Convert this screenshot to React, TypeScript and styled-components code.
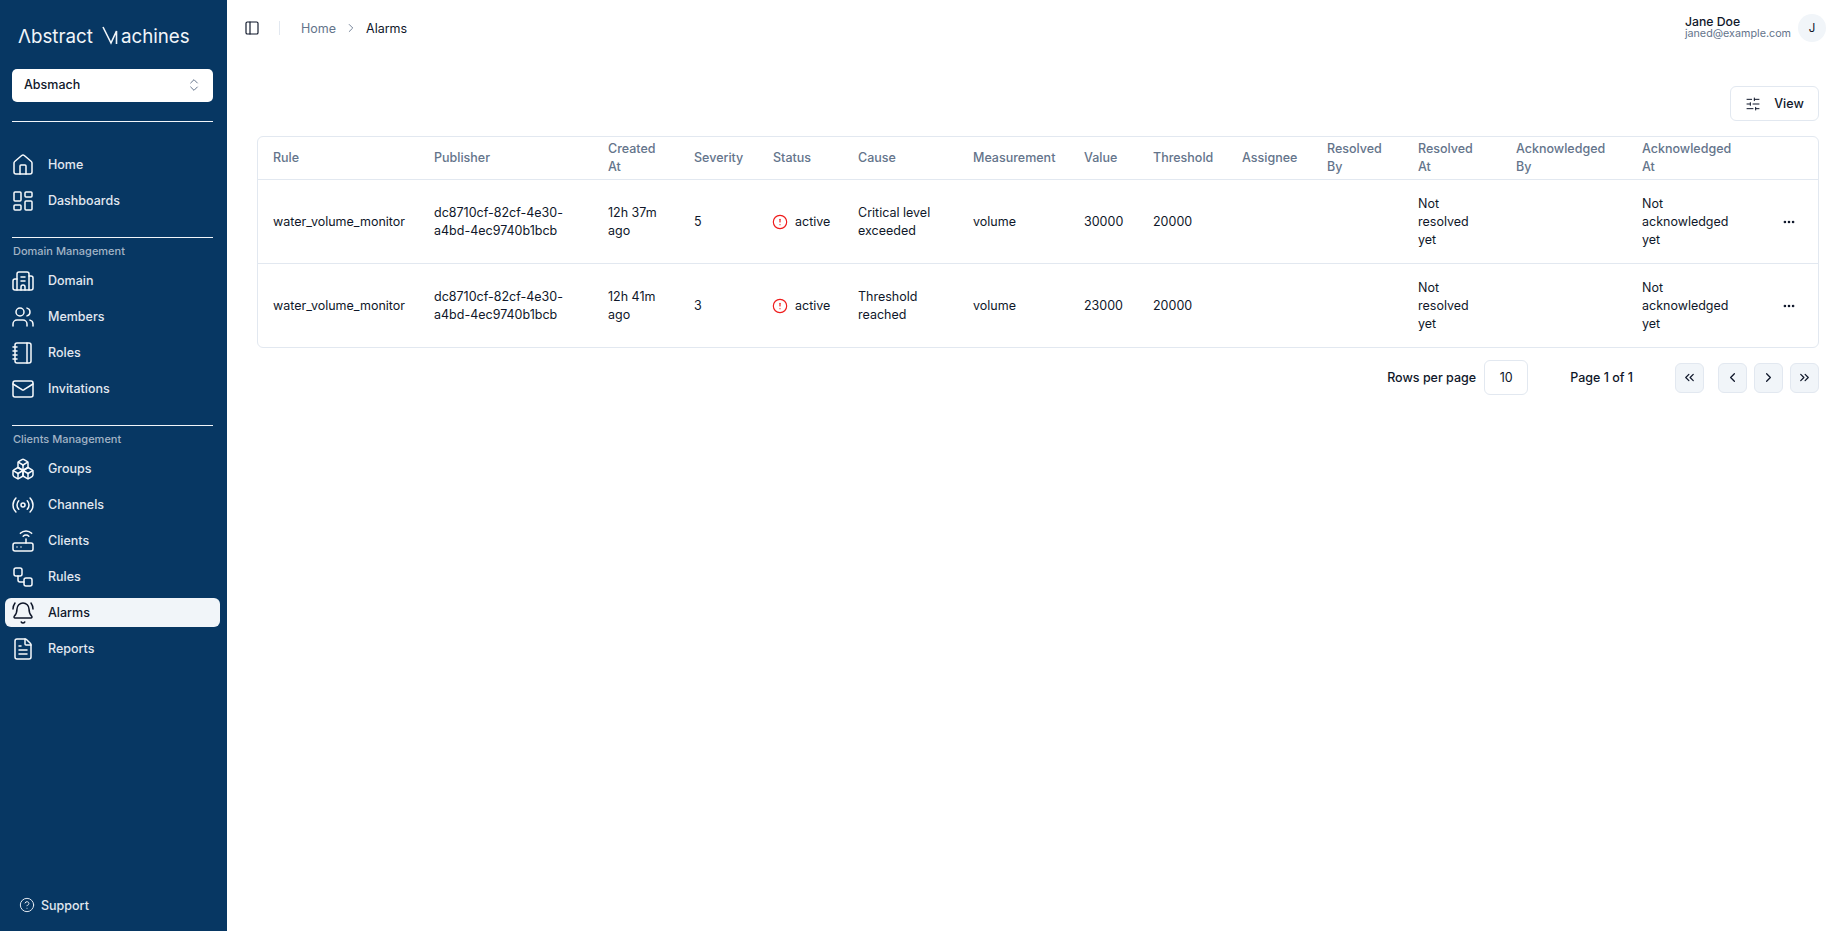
import React from 'react';
import styled, { createGlobalStyle } from 'styled-components';
import {
  Bell, BellRing, Boxes, Building2, ChevronLeft, ChevronRight, ChevronsLeft, ChevronsRight, ChevronsUpDown,
  CircleAlert, CircleHelp, Ellipsis, FileText, House, LayoutDashboard, Mail, Notebook, PanelLeft, Radio,
  Router, SlidersHorizontal, Users, Workflow,
} from 'lucide-react';

const GlobalStyle = createGlobalStyle`
  html, body { margin: 0; padding: 0; height: 100%; background: #fff; }
  body { font-family: Inter, "Noto Sans", sans-serif; color: #0f172a; }
  #root { height: 100%; }
  * { box-sizing: border-box; }
`;

const Shell = styled.div`
  display: flex;
  height: 931px;
  overflow: hidden;
`;

const Sidebar = styled.aside`
  width: 227px;
  flex: none;
  display: flex;
  flex-direction: column;
  background: #073763;
  padding: 0 7px 0 5px;
`;

const Logo = styled.div`
  height: 69px;
  padding: 25px 0 0 13px;
  display: flex;
  align-items: flex-start;
  color: #f1f5f9;
  font-size: 18.75px;
  line-height: 24px;
  font-weight: 400;
  white-space: nowrap;
`;

const LogoMark = styled.svg`
  width: 16px;
  height: 20px;
  margin: 0 3px 0 9px;
  flex: none;
`;

const TeamSelect = styled.button`
  height: 33px;
  margin: 0 0 0 7px;
  width: 201px;
  flex: none;
  padding: 0 11px 2px 12px;
  border: 0;
  border-radius: 5px;
  background: #fff;
  display: flex;
  align-items: center;
  justify-content: space-between;
  font: 500 12.5px Inter, sans-serif;
  color: #0f172a;
  svg { color: #64748b; }
`;

const Divider = styled.hr<{ $top: number; $bottom: number }>`
  width: 201px;
  margin: ${p => p.$top}px 0 ${p => p.$bottom}px 7px;
  border: 0;
  border-top: 1px solid #f1f5f9;
  flex: none;
`;

const GroupLabel = styled.div`
  height: 15px;
  line-height: 15px;
  margin: 0 0 7px 8px;
  font-size: 11px;
  font-weight: 500;
  color: #a3b4c6;
`;

const NavList = styled.nav`
  display: flex;
  flex-direction: column;
  gap: 7px;
`;

const NavItem = styled.a<{ $active?: boolean }>`
  height: 29px;
  display: flex;
  align-items: center;
  gap: 13px;
  padding-left: 6px;
  border-radius: 6px;
  font-size: 12.5px;
  font-weight: 500;
  color: ${p => (p.$active ? '#0f172a' : '#e2e8f0')};
  background: ${p => (p.$active ? '#f1f5f9' : 'transparent')};
  svg { flex: none; width: 24px; height: 24px; stroke-width: 1.5; color: ${p => (p.$active ? '#0f172a' : '#f8fafc')}; }
`;

const SupportLink = styled.a`
  margin: auto 0 17px 14px;
  height: 18px;
  display: flex;
  align-items: center;
  gap: 6px;
  font-size: 12.5px;
  font-weight: 500;
  color: #e2e8f0;
`;

const Main = styled.main`
  flex: 1;
  min-width: 0;
  display: flex;
  flex-direction: column;
`;

const TopBar = styled.header`
  height: 56px;
  flex: none;
  display: flex;
  align-items: center;
  padding: 0 22px 0 17px;
`;

const SideToggle = styled.span`
  display: flex;
  margin-right: 19px;
  color: #0f172a;
`;

const VSep = styled.span`
  width: 1px;
  height: 14px;
  background: #e2e8f0;
  margin-right: 21px;
`;

const Crumbs = styled.div`
  display: flex;
  align-items: center;
  font-size: 12.5px;
  color: #64748b;
  gap: 8px;
  svg { color: #64748b; }
`;

const CrumbNow = styled.span`
  color: #0f172a;
`;

const UserBox = styled.div`
  margin-left: auto;
  display: flex;
  align-items: center;
  gap: 7px;
`;

const UserText = styled.div`
  display: flex;
  flex-direction: column;
  padding-bottom: 2px;
`;

const UserName = styled.span`
  font-size: 12.25px;
  line-height: 13px;
  font-weight: 500;
  color: #0f172a;
`;

const UserMail = styled.span`
  font-size: 10.75px;
  line-height: 12px;
  color: #64748b;
`;

const Avatar = styled.span`
  width: 28px;
  height: 28px;
  border-radius: 50%;
  background: #f1f5f9;
  display: flex;
  align-items: center;
  justify-content: center;
  font-size: 11.5px;
  color: #0f172a;
`;

const Content = styled.section`
  padding: 30px 29px 0 30px;
`;

const ViewRow = styled.div`
  display: flex;
  justify-content: flex-end;
  margin-bottom: 15px;
`;

const ViewButton = styled.button`
  width: 89px;
  height: 35px;
  display: flex;
  align-items: center;
  justify-content: center;
  gap: 13px;
  background: #fff;
  border: 1px solid #e2e8f0;
  border-radius: 6px;
  font: 500 12.5px Inter, sans-serif;
  color: #0f172a;
`;

const TableFrame = styled.div`
  border: 1px solid #e2e8f0;
  border-radius: 6px;
  overflow: hidden;
`;

const Table = styled.table`
  width: 100%;
  table-layout: fixed;
  border-collapse: collapse;
  font-size: 12.5px;
  line-height: 18px;
`;

const Col = styled.col<{ $width: number }>`
  width: ${p => p.$width}px;
`;

const HeadCell = styled.th`
  height: 42px;
  padding: 0 16px 0 15px;
  text-align: left;
  font-weight: 500;
  color: #64748b;
  border-bottom: 1px solid #e2e8f0;
`;

const Row = styled.tr`
  & + & td { border-top: 1px solid #e2e8f0; }
`;

const Cell = styled.td<{ $nowrap?: boolean }>`
  height: 84px;
  padding: 2px 16px 0 15px;
  color: #0f172a;
  white-space: ${p => (p.$nowrap ? 'nowrap' : 'normal')};
`;

const StatusCell = styled.span`
  display: flex;
  align-items: center;
  gap: 7px;
  margin-left: -1px;
  white-space: nowrap;
  svg { color: #ef1c1c; flex: none; }
`;

const DotsButton = styled.span`
  display: flex;
  justify-content: center;
  color: #0f172a;
  margin-left: 4px;
`;

const Pager = styled.div`
  display: flex;
  align-items: center;
  justify-content: flex-end;
  margin-top: 12px;
  font-size: 12.5px;
  font-weight: 500;
  color: #0f172a;
`;

const PageSize = styled.span`
  width: 44px;
  height: 35px;
  margin: 0 42px 0 8px;
  display: flex;
  align-items: center;
  justify-content: center;
  border: 1px solid #e2e8f0;
  border-radius: 6px;
  font-weight: 400;
`;

const PageLabel = styled.span`
  margin-right: 42px;
`;

const PageButton = styled.span<{ $gap: number }>`
  width: 29px;
  height: 30px;
  margin-right: ${p => p.$gap}px;
  display: flex;
  align-items: center;
  justify-content: center;
  background: #f1f5f9;
  border: 1px solid #e2e8f0;
  border-radius: 6px;
  color: #0f172a;
`;

const colWidths = [161, 174, 86, 79, 85, 115, 111, 69, 89, 85, 91, 98, 126, 130, 61];

const headers = [
  'Rule', 'Publisher', 'Created At', 'Severity', 'Status', 'Cause', 'Measurement', 'Value', 'Threshold',
  'Assignee', 'Resolved By', 'Resolved At', 'Acknowledged By', 'Acknowledged At', '',
];

const alarms = [
  { created: '12h 37m ago', severity: '5', cause: 'Critical level exceeded', value: '30000' },
  { created: '12h 41m ago', severity: '3', cause: 'Threshold reached', value: '23000' },
];

const topNav = [
  { label: 'Home', icon: House },
  { label: 'Dashboards', icon: LayoutDashboard },
];

const domainNav = [
  { label: 'Domain', icon: Building2 },
  { label: 'Members', icon: Users },
  { label: 'Roles', icon: Notebook },
  { label: 'Invitations', icon: Mail },
];

const clientNav = [
  { label: 'Groups', icon: Boxes },
  { label: 'Channels', icon: Radio },
  { label: 'Clients', icon: Router },
  { label: 'Rules', icon: Workflow },
  { label: 'Alarms', icon: BellRing, active: true },
  { label: 'Reports', icon: FileText },
];

type NavEntry = { label: string; icon: typeof Bell; active?: boolean };

const NavGroup = ({ items }: { items: NavEntry[] }) => (
  <NavList>
    {items.map(({ label, icon: Icon, active }) => (
      <NavItem key={label} $active={active}>
        <Icon />
        {label}
      </NavItem>
    ))}
  </NavList>
);

export default function App() {
  return (
    <>
      <GlobalStyle />
      <Shell>
        <Sidebar>
          <Logo>
            <span>Λbstract</span>
            <LogoMark viewBox="0 0 16 20" fill="none" stroke="#f1f5f9" strokeWidth="1.6">
              <path d="M1 2 L9 18 L14.5 6 L14.5 19" />
            </LogoMark>
            <span>achines</span>
          </Logo>
          <TeamSelect>
            Absmach
            <ChevronsUpDown size={16} strokeWidth={1.5} />
          </TeamSelect>
          <Divider $top={19} $bottom={28} />
          <NavGroup items={topNav} />
          <Divider $top={22} $bottom={6} />
          <GroupLabel>Domain Management</GroupLabel>
          <NavGroup items={domainNav} />
          <Divider $top={22} $bottom={6} />
          <GroupLabel>Clients Management</GroupLabel>
          <NavGroup items={clientNav} />
          <SupportLink>
            <CircleHelp size={16} strokeWidth={1.5} />
            Support
          </SupportLink>
        </Sidebar>
        <Main>
          <TopBar>
            <SideToggle>
              <PanelLeft size={16} strokeWidth={1.75} />
            </SideToggle>
            <VSep />
            <Crumbs>
              <span>Home</span>
              <ChevronRight size={14} strokeWidth={1.5} />
              <CrumbNow>Alarms</CrumbNow>
            </Crumbs>
            <UserBox>
              <UserText>
                <UserName>Jane Doe</UserName>
                <UserMail>janed@example.com</UserMail>
              </UserText>
              <Avatar>J</Avatar>
            </UserBox>
          </TopBar>
          <Content>
            <ViewRow>
              <ViewButton>
                <SlidersHorizontal size={16} strokeWidth={1.5} />
                View
              </ViewButton>
            </ViewRow>
            <TableFrame>
              <Table>
                <colgroup>
                  {colWidths.map((w, i) => (
                    <Col key={i} $width={w} />
                  ))}
                </colgroup>
                <thead>
                  <tr>
                    {headers.map((h, i) => (
                      <HeadCell key={i}>{h}</HeadCell>
                    ))}
                  </tr>
                </thead>
                <tbody>
                  {alarms.map(alarm => (
                    <Row key={alarm.created}>
                      <Cell $nowrap>water_volume_monitor</Cell>
                      <Cell>dc8710cf-82cf-4e30-a4bd-4ec9740b1bcb</Cell>
                      <Cell>{alarm.created}</Cell>
                      <Cell>{alarm.severity}</Cell>
                      <Cell>
                        <StatusCell>
                          <CircleAlert size={16} strokeWidth={1.75} />
                          active
                        </StatusCell>
                      </Cell>
                      <Cell>{alarm.cause}</Cell>
                      <Cell>volume</Cell>
                      <Cell $nowrap>{alarm.value}</Cell>
                      <Cell $nowrap>20000</Cell>
                      <Cell />
                      <Cell />
                      <Cell>Not resolved yet</Cell>
                      <Cell />
                      <Cell>Not acknowledged yet</Cell>
                      <Cell>
                        <DotsButton>
                          <Ellipsis size={14} strokeWidth={2.5} />
                        </DotsButton>
                      </Cell>
                    </Row>
                  ))}
                </tbody>
              </Table>
            </TableFrame>
            <Pager>
              Rows per page
              <PageSize>10</PageSize>
              <PageLabel>Page 1 of 1</PageLabel>
              <PageButton $gap={14}><ChevronsLeft size={15} strokeWidth={2} /></PageButton>
              <PageButton $gap={7}><ChevronLeft size={15} strokeWidth={2} /></PageButton>
              <PageButton $gap={7}><ChevronRight size={15} strokeWidth={2} /></PageButton>
              <PageButton $gap={0}><ChevronsRight size={15} strokeWidth={2} /></PageButton>
            </Pager>
          </Content>
        </Main>
      </Shell>
    </>
  );
}
